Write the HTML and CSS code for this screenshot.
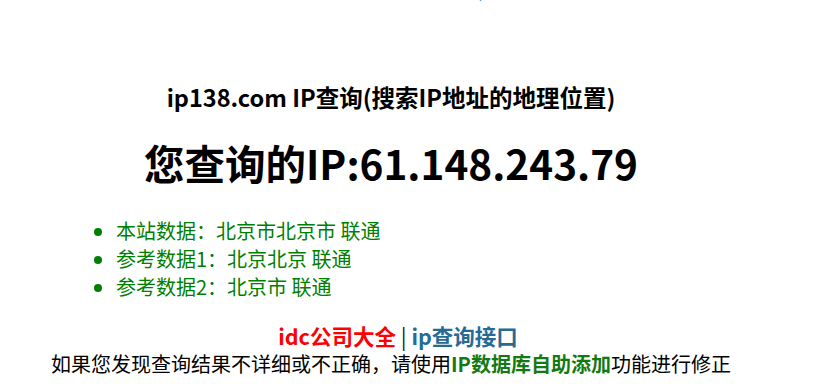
FILE: index.html
```html
<!DOCTYPE html>
<html lang="zh-CN">
<head>
  <meta charset="UTF-8" />
  <title>ip138.com IP查询</title>
  <link rel="stylesheet" href="styles.css">
</head>
<body>
  <div class="wrap">
    <!-- top links, scrolled mostly out of view -->
    <div class="top-links">
      <a href="#">(g)</a><span class="spacer"></span><a href="#">j</a><span class="gap0"></span><a href="#">p</a><span class="gap1"></span><a href="#">(</a><span class="gap2"></span><a href="#">)</a><span class="gap3"></span><a href="#">|</a>
    </div>

    <h3 class="title">ip138.com IP查询(搜索IP地址的地理位置)</h3>
    <h1 class="ip">您查询的IP:61.148.243.79</h1>

    <ul class="result">
      <li>本站数据：北京市北京市 联通</li>
      <li>参考数据1：北京北京 联通</li>
      <li>参考数据2：北京市 联通</li>
    </ul>

    <p class="links"><a href="#" class="red">idc公司大全</a> | <a href="#" class="blue">ip查询接口</a></p>
    <p class="note">如果您发现查询结果不详细或不正确，请使用<a href="#" class="green">IP数据库自助添加</a>功能进行修正</p>
  </div>
</body>
</html>
```

FILE: styles.css
```css
body {
  margin: 0;
  font-family: "Noto Sans CJK SC", "Noto Sans", sans-serif;
  color: #000;
  background: #fff;
}

.wrap {
  width: 782px;
  text-align: center;
}

.top-links {
  height: 20px;
  line-height: 20px;
  margin-top: -21px;
  text-align: left;
  padding-left: 127px;
  font-size: 16px;
}

.top-links a {
  color: #1a6fb5;
  text-decoration: none;
}

.spacer { display: inline-block; width: 172px; }
.gap0 { display: inline-block; width: 10px; }
.gap1 { display: inline-block; width: 22px; }
.gap2 { display: inline-block; width: 44px; }
.gap3 { display: inline-block; width: 58px; }

.title {
  font-size: 23.5px;
  font-weight: bold;
  line-height: 28px;
  margin: 84px 0 0;
}

.ip {
  font-size: 40.5px;
  font-weight: bold;
  line-height: 50px;
  margin: 27px 0 0;
}

.result {
  text-align: left;
  margin: 29px 0 0 76px;
  padding-left: 40px;
  font-size: 20px;
  line-height: 28px;
  color: #008000;
}

.links {
  font-size: 21.5px;
  line-height: 28px;
  margin: 21px 0 0;
  padding-left: 14px;
  color: #0d1a40;
}

.links a {
  font-weight: bold;
  text-decoration: none;
}

.red { color: #ff0000; }
.blue { color: #256b96; }

.note {
  font-size: 20px;
  line-height: 27px;
  margin: 0;
}

.green {
  color: #137a13;
  font-weight: bold;
  text-decoration: none;
}
```
